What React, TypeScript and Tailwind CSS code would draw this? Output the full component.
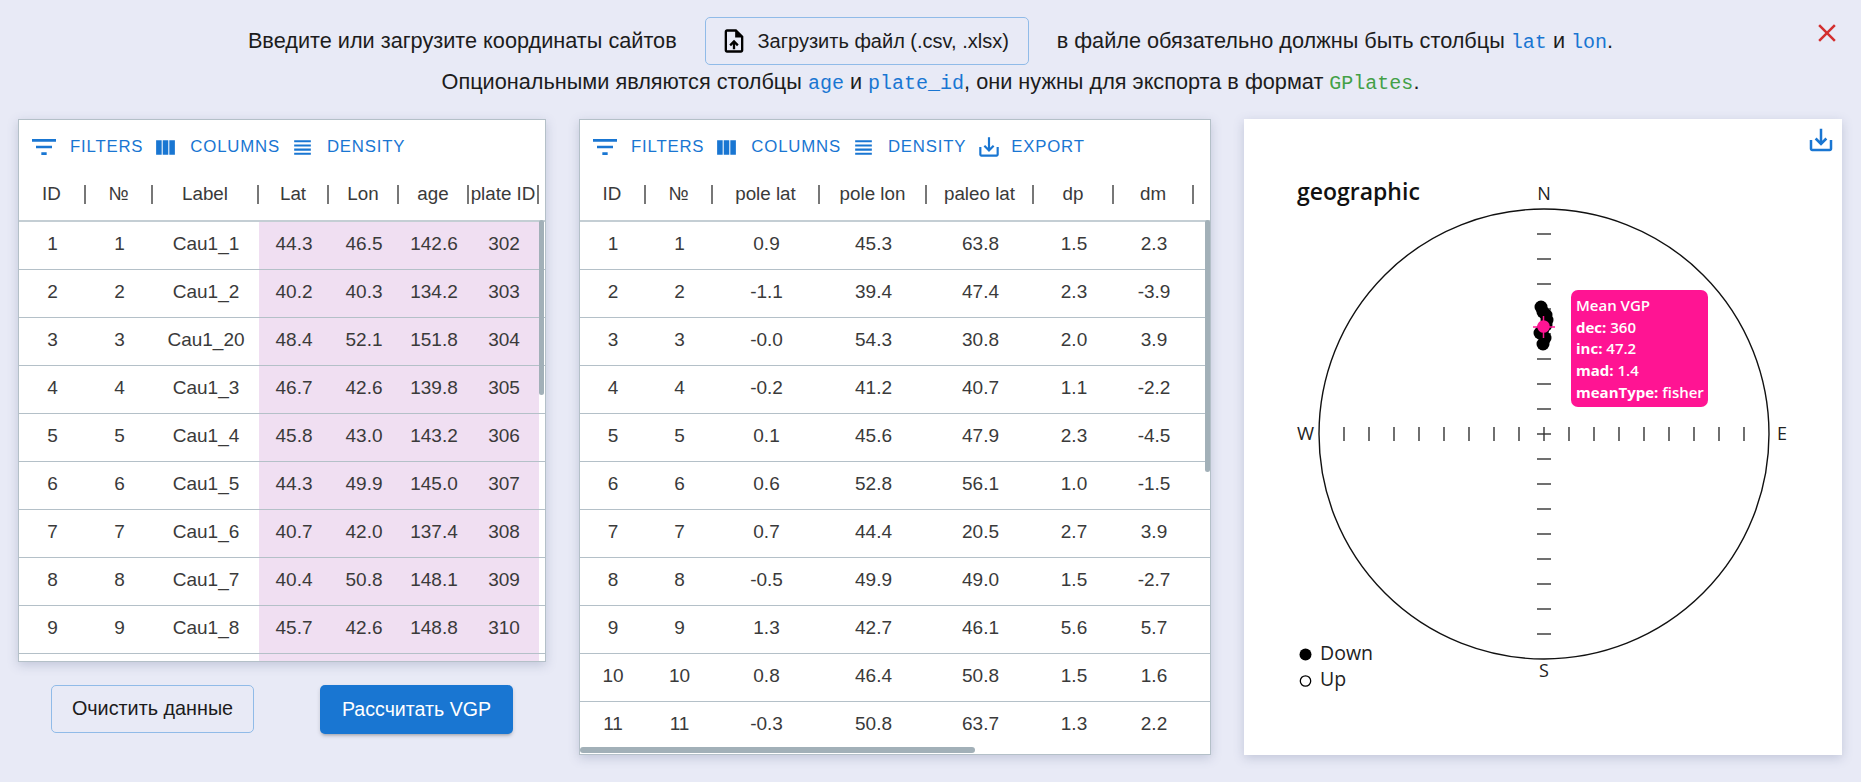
const inputCols = ['ID', '№', 'Label', 'Lat', 'Lon', 'age', 'plate ID'];
const inputRows = [
  ['1', '1', 'Cau1_1', '44.3', '46.5', '142.6', '302'],
  ['2', '2', 'Cau1_2', '40.2', '40.3', '134.2', '303'],
  ['3', '3', 'Cau1_20', '48.4', '52.1', '151.8', '304'],
  ['4', '4', 'Cau1_3', '46.7', '42.6', '139.8', '305'],
  ['5', '5', 'Cau1_4', '45.8', '43.0', '143.2', '306'],
  ['6', '6', 'Cau1_5', '44.3', '49.9', '145.0', '307'],
  ['7', '7', 'Cau1_6', '40.7', '42.0', '137.4', '308'],
  ['8', '8', 'Cau1_7', '40.4', '50.8', '148.1', '309'],
  ['9', '9', 'Cau1_8', '45.7', '42.6', '148.8', '310'],
  ['', '', '', '', '', '', ''],
];

const vgpCols = ['ID', '№', 'pole lat', 'pole lon', 'paleo lat', 'dp', 'dm'];
const vgpRows = [
  ['1', '1', '0.9', '45.3', '63.8', '1.5', '2.3'],
  ['2', '2', '-1.1', '39.4', '47.4', '2.3', '-3.9'],
  ['3', '3', '-0.0', '54.3', '30.8', '2.0', '3.9'],
  ['4', '4', '-0.2', '41.2', '40.7', '1.1', '-2.2'],
  ['5', '5', '0.1', '45.6', '47.9', '2.3', '-4.5'],
  ['6', '6', '0.6', '52.8', '56.1', '1.0', '-1.5'],
  ['7', '7', '0.7', '44.4', '20.5', '2.7', '3.9'],
  ['8', '8', '-0.5', '49.9', '49.0', '1.5', '-2.7'],
  ['9', '9', '1.3', '42.7', '46.1', '5.6', '5.7'],
  ['10', '10', '0.8', '46.4', '50.8', '1.5', '1.6'],
  ['11', '11', '-0.3', '50.8', '63.7', '1.3', '2.2'],
];

const ticks = [-8, -7, -6, -5, -4, -3, -2, -1, 1, 2, 3, 4, 5, 6, 7, 8];
const dots = [
  [297, 188], [299, 193], [302, 196], [303, 201], [302, 206], [299, 210],
  [298, 214], [301, 219], [296, 214], [299, 225],
];

function MuiIcon({ d, className }: { d: string; className: string }) {
  return (
    <svg viewBox="0 0 24 24" fill="currentColor" className={className}>
      <path d={d} />
    </svg>
  );
}

const filterIcon = 'M10 18h4v-2h-4v2zM3 6v2h18V6H3zm3 7h12v-2H6v2z';
const columnsIcon = 'M14.67 5v14H9.33V5h5.34zm1 14H21V5h-5.33v14zm-7.34 0V5H3v14h5.33z';
const densityIcon = 'M4 15h16v-2H4v2zm0 4h16v-2H4v2zm0-8h16V9H4v2zm0-6v2h16V5H4z';
const saveIcon = 'M19 12v7H5v-7H3v7c0 1.1.9 2 2 2h14c1.1 0 2-.9 2-2v-7h-2zm-6 .67l2.59-2.58L17 11.5l-5 5-5-5 1.41-1.41L11 12.67V3h2z';
const uploadIcon = 'M14 2H6c-1.1 0-1.99.9-1.99 2L4 20c0 1.1.89 2 1.99 2H18c1.1 0 2-.9 2-2V8l-6-6zm4 18H6V4h7v5h5v11zM8 15.01l1.41 1.41L11 14.84V19h2v-4.16l1.59 1.59L16 15.01 12.01 11z';
const closeIcon = 'M19 6.41 17.59 5 12 10.59 6.41 5 5 6.41 10.59 12 5 17.59 6.41 19 12 13.41 17.59 19 19 17.59 13.41 12z';

function ToolButton({ icon, label, iconClass }: { icon: string; label: string; iconClass: string }) {
  return (
    <span className="flex items-center gap-[12px]">
      <MuiIcon d={icon} className={iconClass} />
      <span className="text-[16.8px] tracking-[0.8px] text-[#1976d2]">{label}</span>
    </span>
  );
}

function DataTable({
  columns,
  rows,
  template,
  tinted,
  exportable,
  className,
}: {
  columns: string[];
  rows: string[][];
  template: string;
  tinted?: boolean;
  exportable?: boolean;
  className: string;
}) {
  return (
    <div className={`relative overflow-hidden border border-[#b4c0c8] bg-white shadow-[0_3px_10px_rgba(80,90,130,0.25)] ${className}`}>
      <div className="flex h-[52px] items-center gap-[10px] pl-[9px] pt-[2px]">
        <ToolButton icon={filterIcon} label="FILTERS" iconClass="-mr-[2px] h-[32px] w-[32px] text-[#1976d2]" />
        <ToolButton icon={columnsIcon} label="COLUMNS" iconClass="h-[25px] w-[25px] text-[#1976d2]" />
        <ToolButton icon={densityIcon} label="DENSITY" iconClass="h-[25px] w-[25px] text-[#1976d2]" />
        {exportable && <ToolButton icon={saveIcon} label="EXPORT" iconClass="-mr-[3px] h-[26px] w-[26px] text-[#1976d2]" />}
      </div>

      <div className={`grid h-[50px] items-center border-b-2 border-[#c4ced4] pb-[3px] ${template}`}>
        {columns.map((col) => (
          <div key={col} className="flex h-full items-center">
            <span className="flex-1 whitespace-nowrap text-center text-[18.8px] text-[#3a3a3a]">{col}</span>
            <span className="h-[19px] w-[2px] shrink-0 bg-[#777777]" />
          </div>
        ))}
      </div>

      {rows.map((row, r) => (
        <div key={r} className={`grid h-[48px] border-b border-[#b4c0c8] last:border-b-0 ${template}`}>
          {row.map((cell, c) => (
            <div
              key={c}
              className={`flex items-center justify-center pb-[3px] text-[19px] text-[#3a3a3a] ${tinted && c >= 3 ? 'bg-[#f0dff2]' : ''}`}
            >
              {cell}
            </div>
          ))}
        </div>
      ))}
    </div>
  );
}

export default function App() {
  return (
    <div className="relative h-[782px] w-[1861px] overflow-hidden bg-[#e8eaf6] font-['Liberation_Sans',Arial,sans-serif] text-[#1c1c1c]">
      <div className="flex h-[119px] flex-col items-center pt-[17px]">
        <div className="flex h-[48px] items-center text-[21.7px]">
          <span>Введите или загрузите координаты сайтов</span>
          <button className="mx-[28px] flex h-[48px] w-[324px] items-center justify-center gap-[10px] rounded-[5px] border border-[#90bbe8] pr-[5px] text-[20px]">
            <MuiIcon d={uploadIcon} className="h-[28px] w-[28px] text-black" />
            Загрузить файл (.csv, .xlsx)
          </button>
          <span>
            в файле обязательно должны быть столбцы{' '}
            <code className="font-['Liberation_Mono',monospace] text-[20px] text-[#1976d2]">lat</code> и{' '}
            <code className="font-['Liberation_Mono',monospace] text-[20px] text-[#1976d2]">lon</code>.
          </span>
        </div>
        <div className="mt-[1px] text-[21.7px]">
          Опциональными являются столбцы{' '}
          <code className="font-['Liberation_Mono',monospace] text-[20px] text-[#1976d2]">age</code> и{' '}
          <code className="font-['Liberation_Mono',monospace] text-[20px] text-[#1976d2]">plate_id</code>, они нужны для экспорта в формат{' '}
          <code className="font-['Liberation_Mono',monospace] text-[20px] text-[#43a047]">GPlates</code>.
        </div>
      </div>

      <MuiIcon d={closeIcon} className="absolute left-[1812px] top-[18px] h-[30px] w-[30px] text-[#d32f2f]" />

      <div className="flex items-start gap-[33px] pl-[18px]">
        <div className="flex flex-col">
          <DataTable
            columns={inputCols}
            rows={inputRows}
            template="grid-cols-[67px_67px_106px_70px_70px_70px_70px_6px]"
            tinted
            className="h-[543px] w-[528px]"
          />
          <div className="mt-[23px] flex gap-[66px] pl-[33px]">
            <button className="h-[48px] w-[203px] rounded-[5px] border border-[#90bbe8] text-[19.8px] text-[#1c1c1c]">
              Очистить данные
            </button>
            <button className="h-[49px] w-[193px] rounded-[5px] bg-[#1976d2] text-[19.6px] text-white shadow-[0_3px_3px_-2px_rgba(0,0,0,0.2),0_2px_4px_rgba(0,0,0,0.14)]">
              Рассчитать VGP
            </button>
          </div>
        </div>

        <div className="relative">
          <DataTable
            columns={vgpCols}
            rows={vgpRows}
            template="grid-cols-[66px_67px_107px_107px_107px_80px_80px_12px]"
            exportable
            className="h-[636px] w-[632px]"
          />
          <div className="absolute left-[1px] top-[628px] h-[6px] w-[395px] rounded-full bg-[#a2b0b8]" />
          <div className="absolute right-[1px] top-[101px] h-[252px] w-[5px] rounded-full bg-[#a2b0b8]" />
        </div>

        <div className="relative h-[636px] w-[598px] bg-white shadow-[0_3px_10px_rgba(80,90,130,0.25)]">
          <svg viewBox="0 0 598 636" className="h-[636px] w-[598px] font-['Open_Sans',sans-serif]">
            <circle cx="300" cy="315" r="225" fill="none" stroke="#111" strokeWidth="1.4" />
            {ticks.map((t) => (
              <line key={`v${t}`} x1="293" x2="307" y1={315 + t * 25} y2={315 + t * 25} stroke="#333" strokeWidth="1.4" />
            ))}
            {ticks.map((t) => (
              <line key={`h${t}`} x1={300 + t * 25} x2={300 + t * 25} y1="308" y2="322" stroke="#333" strokeWidth="1.4" />
            ))}
            <line x1="293" x2="307" y1="315" y2="315" stroke="#333" strokeWidth="1.4" />
            <line x1="300" x2="300" y1="308" y2="322" stroke="#333" strokeWidth="1.4" />

            {dots.map(([x, y], i) => (
              <circle key={i} cx={x} cy={y} r="6.5" fill="#000" />
            ))}
            <line x1="289" x2="311" y1="208" y2="208" stroke="#ff1493" strokeWidth="1.5" />
            <line x1="299.5" x2="299.5" y1="197" y2="219" stroke="#ff1493" strokeWidth="1.5" />
            <circle cx="299.5" cy="207.5" r="6.3" fill="#ff1493" />

            <text x="53" y="81" fontSize="23" fontWeight="600" fill="#111">geographic</text>
            <text x="300" y="81" fontSize="18" textAnchor="middle" fill="#222">N</text>
            <text x="300" y="558" fontSize="18" textAnchor="middle" fill="#222">S</text>
            <text x="53" y="321" fontSize="18.5" fill="#222">W</text>
            <text x="533" y="321" fontSize="18" fill="#222">E</text>

            <circle cx="61.5" cy="535.5" r="6" fill="#000" />
            <circle cx="61.5" cy="562" r="5.2" fill="#fff" stroke="#000" strokeWidth="1.3" />
            <text x="76" y="541" fontSize="19.5" fill="#222">Down</text>
            <text x="76" y="567" fontSize="19.5" fill="#222">Up</text>
          </svg>

          <div className="absolute left-[327px] top-[171px] h-[117px] w-[137px] rounded-[7px] bg-[#ff1493] px-[5px] pt-[5px] font-['Open_Sans',sans-serif] text-[15px] leading-[21.7px] text-white">
            <div className="font-semibold">Mean VGP</div>
            <div><span className="font-bold">dec:</span> <span className="font-semibold">360</span></div>
            <div><span className="font-bold">inc:</span> <span className="font-semibold">47.2</span></div>
            <div><span className="font-bold">mad:</span> <span className="font-semibold">1.4</span></div>
            <div className="whitespace-nowrap"><span className="font-bold">meanType:</span> <span className="font-semibold">fisher</span></div>
          </div>

          <MuiIcon d={saveIcon} className="absolute right-[6px] top-[6px] h-[30px] w-[30px] text-[#1976d2]" />
        </div>
      </div>

      {/* scrollbar thumb of the input table */}
      <div className="absolute left-[539px] top-[220px] h-[175px] w-[5px] rounded-full bg-[#a2b0b8]" />
    </div>
  );
}
